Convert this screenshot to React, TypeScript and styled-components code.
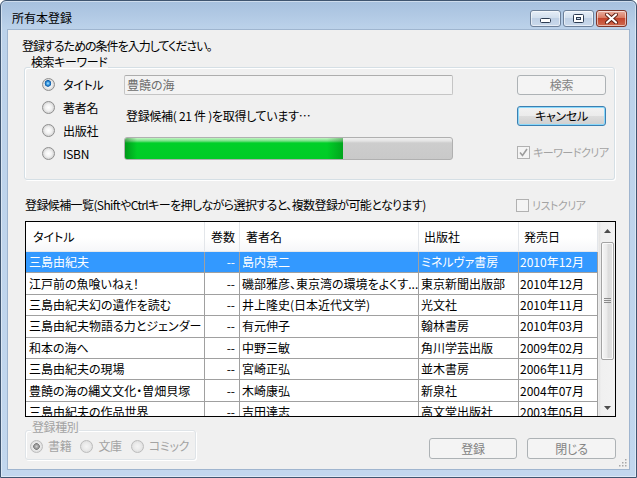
import styled, { createGlobalStyle } from 'styled-components';

const GlobalStyle = createGlobalStyle`
  html, body { margin: 0; padding: 0; }
  body {
    width: 637px;
    height: 478px;
    overflow: hidden;
    font-family: "Noto Sans CJK JP", "Noto Sans", sans-serif;
    font-size: 12px;
    font-feature-settings: "palt";
    color: #000;
  }
  * { box-sizing: border-box; }
`;

const Window = styled.div`
  width: 637px;
  height: 478px;
  border: 1px solid #3f5570;
  border-radius: 6px 6px 0 0;
  background: linear-gradient(#a6c0de 0px, #bcd2ea 28px, #c2d7ee 100%);
  box-shadow: inset 0 0 0 1px rgba(255, 255, 255, 0.45);
  padding: 0 7px 8px 7px;
  display: flex;
  flex-direction: column;
`;

const TitleBar = styled.div`
  height: 29px;
  display: flex;
  align-items: flex-start;
  padding-left: 4px;
`;

const TitleText = styled.div`
  margin-top: 10px;
  line-height: 14px;
`;

const CaptionButtons = styled.div`
  margin: 9px 2px 0 auto;
  display: flex;
  gap: 2px;
`;

const CaptionButton = styled.div<{ $close?: boolean }>`
  width: 31px;
  height: 17px;
  border-radius: 3px;
  border: 1px solid ${({ $close }) => ($close ? '#80362a' : '#6d8099')};
  background: ${({ $close }) =>
    $close
      ? 'linear-gradient(#eab0a2 0, #d97a62 45%, #c4452d 50%, #cf6a4f 100%)'
      : 'linear-gradient(#e6eef8 0, #d2dfee 45%, #bfd0e5 50%, #cad9eb 100%)'};
  box-shadow: inset 0 0 0 1px rgba(255, 255, 255, 0.55);
  display: flex;
  align-items: center;
  justify-content: center;
`;

const Client = styled.div`
  flex: 1;
  position: relative;
  background: #f0f0f0;
  box-shadow: 0 0 0 1px #9fb5cf;
  display: flex;
  flex-direction: column;
  padding: 0 13px 0 16px;
`;

const Intro = styled.div`
  margin: 9px 0 0 -2px;
  line-height: 14px;
  letter-spacing: -1px;
`;

const GroupBox = styled.div<{ $disabled?: boolean }>`
  border: 1px solid ${({ $disabled }) => ($disabled ? '#dfe4e8' : '#d5dfe5')};
  border-radius: 3px;
  box-shadow: inset 1px 1px 0 #fff, 1px 1px 0 #fff;
`;

const SearchGroup = styled(GroupBox)`
  margin-top: 14px;
  margin-right: 1px;
  height: 113px;
`;

const Legend = styled.div<{ $disabled?: boolean; $offset: number }>`
  width: fit-content;
  margin: ${({ $offset }) => `-${$offset}px 0 0 5px`};
  padding: 0 1px;
  line-height: 12px;
  letter-spacing: -0.4px;
  background: #f0f0f0;
  color: ${({ $disabled }) => ($disabled ? '#a3a3a3' : '#000')};
`;

const SearchBody = styled.div`
  display: grid;
  grid-template-columns: 99px 329px 64px 89px;
`;

const RadioColumn = styled.div`
  padding: 5px 0 0 17px;
  display: flex;
  flex-direction: column;
`;

const RadioRow = styled.div`
  height: 23px;
  display: flex;
  align-items: center;
  gap: 8px;
`;

const RadioMark = styled.span<{ $checked?: boolean; $disabled?: boolean }>`
  flex: none;
  width: 13px;
  height: 13px;
  border-radius: 50%;
  border: 1px solid ${({ $disabled }) => ($disabled ? '#bcbcbc' : '#8f8f8f')};
  background: ${({ $checked, $disabled }) => {
    const base = $disabled
      ? 'radial-gradient(circle, #f4f4f4 0, #ececec 3px, #dedede 6px)'
      : 'radial-gradient(circle, #ffffff 0, #f2f2f2 3px, #d2d2d2 6px)';
    if (!$checked) return base;
    const dot = $disabled
      ? 'radial-gradient(circle, #d0d0d0 0, #9a9a9a 2px, #7c7c7c 3px, transparent 3.6px)'
      : 'radial-gradient(circle at 45% 40%, #b6e6ff 0, #3a9be2 1.6px, #0e5aa6 3px, transparent 3.6px)';
    return `${dot}, ${base}`;
  }};
`;

const RadioLabel = styled.span<{ $disabled?: boolean }>`
  line-height: 14px;
  letter-spacing: -0.3px;
  color: ${({ $disabled }) => ($disabled ? '#a3a3a3' : '#000')};
`;

const MiddleColumn = styled.div`
  display: flex;
  flex-direction: column;
`;

const KeywordField = styled.div`
  margin-top: 7px;
  height: 20px;
  border: 1px solid #c5c5c5;
  border-top-color: #adadad;
  border-radius: 2px;
  background: #f3f3f3;
  color: #6d6d6d;
  padding-left: 2px;
  line-height: 18px;
`;

const StatusText = styled.div`
  margin-top: 14px;
  line-height: 14px;
  padding-left: 2px;
  letter-spacing: -0.3px;
`;

const ProgressTrack = styled.div`
  margin-top: 14px;
  height: 23px;
  border: 1px solid #b0b0b0;
  border-radius: 3px;
  overflow: hidden;
  background: linear-gradient(#f0f0f0 0, #e4e4e4 3px, #cdcdcd 5px, #c9c9c9 100%);
`;

const ProgressFill = styled.div`
  height: 100%;
  background:
    linear-gradient(90deg, rgba(0, 90, 10, 0.45) 0, rgba(0, 90, 10, 0) 12px, rgba(0, 90, 10, 0) calc(100% - 16px), rgba(0, 90, 10, 0.35) 100%),
    linear-gradient(#c4f6c4 0, #74e184 3px, #00cf28 5px, #00cc26 100%);
`;

const RightColumn = styled.div`
  grid-column: 4;
  display: flex;
  flex-direction: column;
  padding-top: 7px;
`;

const Button = styled.div<{ $disabled?: boolean; $focused?: boolean; $w?: number; $h?: number }>`
  width: ${({ $w }) => ($w ? `${$w}px` : 'auto')};
  height: ${({ $h }) => ($h ? `${$h}px` : '20px')};
  border-radius: 3px;
  display: flex;
  align-items: center;
  justify-content: center;
  line-height: 14px;
  letter-spacing: -0.3px;
  border: 1px solid ${({ $disabled, $focused }) => ($disabled ? '#adb2b5' : $focused ? '#3c7fb1' : '#707070')};
  background: ${({ $disabled }) =>
    $disabled ? '#f4f4f4' : 'linear-gradient(#f2f2f2 0, #ebebeb 50%, #dddddd 50%, #cfcfcf 100%)'};
  box-shadow: ${({ $disabled, $focused }) =>
    $disabled ? 'none' : $focused ? 'inset 0 0 0 1px #8ad9fb' : 'inset 0 0 0 1px #fcfcfc'};
  color: ${({ $disabled }) => ($disabled ? '#838383' : '#000')};
`;

const CancelButton = styled(Button)`
  margin-top: 11px;
`;

const CheckRow = styled.div<{ $top?: number }>`
  margin-top: ${({ $top }) => $top ?? 0}px;
  display: flex;
  align-items: center;
  gap: 3px;
  line-height: 14px;
  font-size: 11px;
  letter-spacing: -0.5px;
  white-space: nowrap;
  color: #a3a3a3;
`;

const CheckBox = styled.span`
  flex: none;
  width: 13px;
  height: 13px;
  border: 1px solid #b1b1b1;
  background: #f4f4f4;
  display: flex;
  align-items: center;
  justify-content: center;
`;

const ListLabelRow = styled.div`
  margin-top: 18px;
  display: grid;
  grid-template-columns: 1fr 100px;
  line-height: 14px;
  padding-left: 1px;
`;

const ListLabel = styled.span`
  letter-spacing: -0.6px;
  white-space: nowrap;
`;

const ListView = styled.div`
  margin: 9px 0 0 1px;
  height: 196px;
  border: 1px solid #000;
  background: #fff;
  display: grid;
  grid-template-columns: 1fr 17px;
  overflow: hidden;
`;

const Table = styled.div`
  overflow: hidden;
`;

const columns = '179px 35px 179px 100px 79px';

const HeaderRow = styled.div`
  display: grid;
  grid-template-columns: ${columns};
  height: 30px;
  border-bottom: 1px solid #e6e8eb;
  background: linear-gradient(#ffffff 0, #ffffff 55%, #f6f7f9 100%);
`;

const HeaderCell = styled.div<{ $pad: number }>`
  display: flex;
  align-items: center;
  padding-left: ${({ $pad }) => $pad}px;
  border-right: 1px solid #e3e6ea;
  line-height: 14px;
`;

const Row = styled.div<{ $selected?: boolean }>`
  display: grid;
  grid-template-columns: ${columns};
  height: 21.4px;
  border-bottom: 1px solid #a0a0a0;
  background: ${({ $selected }) => ($selected ? '#3399ff' : '#fff')};
  color: ${({ $selected }) => ($selected ? '#fff' : '#000')};
`;

const Cell = styled.div<{ $pad?: number; $right?: boolean }>`
  display: flex;
  align-items: center;
  justify-content: ${({ $right }) => ($right ? 'flex-end' : 'flex-start')};
  padding: ${({ $pad, $right }) => ($right ? `0 4px 0 0` : `0 0 0 ${$pad ?? 1}px`)};
  border-right: 1px solid #a0a0a0;
  white-space: nowrap;
  overflow: hidden;
  line-height: 14px;
`;

const ScrollBar = styled.div`
  display: flex;
  flex-direction: column;
  background: linear-gradient(90deg, #e2e2e2 0, #f0f0f0 2px, #f2f2f2 100%);
  border-left: 1px solid #ececec;
`;

const ArrowBox = styled.div`
  height: 17px;
  flex: none;
  display: flex;
  align-items: center;
  justify-content: center;
`;

const Track = styled.div`
  flex: 1;
  padding: 3px 1px 0 2px;
`;

const Thumb = styled.div`
  height: 118px;
  border: 1px solid #a3a3a3;
  border-radius: 2px;
  background: linear-gradient(90deg, #f6f6f6 0, #eaeaea 45%, #dcdcdc 55%, #e3e3e3 100%);
  box-shadow: inset 0 0 0 1px #fafafa;
  display: flex;
  align-items: center;
  justify-content: center;
`;

const BottomRow = styled.div`
  margin-top: 13px;
  display: flex;
  align-items: flex-start;
`;

const KindGroup = styled(GroupBox)`
  margin-left: 1px;
  width: 171px;
  height: 30px;
`;

const KindOptions = styled.div`
  margin-top: 6px;
  padding-left: 4px;
  display: flex;
  gap: 9px;
`;

const KindOption = styled.div`
  display: flex;
  align-items: center;
  gap: 5px;
`;

const ActionButtons = styled.div`
  margin: 8px 0 0 auto;
  display: flex;
  gap: 10px;
`;

const Grip = styled.svg`
  position: absolute;
  right: 2px;
  bottom: 2px;
`;

type Book = { title: string; author: string; publisher: string; date: string };

const books: Book[] = [
  { title: '三島由紀夫', author: '島内景二', publisher: 'ミネルヴァ書房', date: '2010年12月' },
  { title: '江戸前の魚喰いねぇ！', author: '磯部雅彦、東京湾の環境をよくす...', publisher: '東京新聞出版部', date: '2010年12月' },
  { title: '三島由紀夫幻の遺作を読む', author: '井上隆史(日本近代文学)', publisher: '光文社', date: '2010年11月' },
  { title: '三島由紀夫物語る力とジェンダー', author: '有元伸子', publisher: '翰林書房', date: '2010年03月' },
  { title: '和本の海へ', author: '中野三敏', publisher: '角川学芸出版', date: '2009年02月' },
  { title: '三島由紀夫の現場', author: '宮崎正弘', publisher: '並木書房', date: '2006年11月' },
  { title: '豊饒の海の縄文文化・曽畑貝塚', author: '木崎康弘', publisher: '新泉社', date: '2004年07月' },
  { title: '三島由紀夫の作品世界', author: '吉田達志', publisher: '高文堂出版社', date: '2003年05月' },
];

const CheckMark = () => (
  <svg width="9" height="9" viewBox="0 0 9 9">
    <path d="M1 4.5 L3.5 7.5 L8 1" fill="none" stroke="#9c9c9c" strokeWidth="1.6" />
  </svg>
);

const fetched = 14;
const total = 21;

export default function App() {
  return (
    <>
      <GlobalStyle />
      <Window>
        <TitleBar>
          <TitleText>所有本登録</TitleText>
          <CaptionButtons>
            <CaptionButton>
              <svg width="11" height="6" viewBox="0 0 11 6" style={{ marginTop: 5 }}>
                <rect x="0.5" y="0.5" width="10" height="4" rx="1" fill="#fff" stroke="#2c3b52" />
              </svg>
            </CaptionButton>
            <CaptionButton>
              <svg width="11" height="9" viewBox="0 0 11 9">
                <rect x="0.5" y="0.5" width="10" height="8" rx="1" fill="#fff" stroke="#2c3b52" />
                <rect x="3.5" y="3.5" width="4" height="2" fill="#c9d8ea" stroke="#2c3b52" />
              </svg>
            </CaptionButton>
            <CaptionButton $close>
              <svg width="13" height="11" viewBox="0 0 13 11">
                <path d="M2 1.5 L11 9.5 M11 1.5 L2 9.5" stroke="#5b1d12" strokeWidth="4" strokeLinecap="round" />
                <path d="M2 1.5 L11 9.5 M11 1.5 L2 9.5" stroke="#fff" strokeWidth="2.2" strokeLinecap="round" />
              </svg>
            </CaptionButton>
          </CaptionButtons>
        </TitleBar>

        <Client>
          <Intro>登録するための条件を入力してください。</Intro>

          <SearchGroup>
            <Legend $offset={12}>検索キーワード</Legend>
            <SearchBody>
              <RadioColumn>
                {['タイトル', '著者名', '出版社', 'ISBN'].map((label, i) => (
                  <RadioRow key={label}>
                    <RadioMark $checked={i === 0} />
                    <RadioLabel>{label}</RadioLabel>
                  </RadioRow>
                ))}
              </RadioColumn>
              <MiddleColumn>
                <KeywordField>豊饒の海</KeywordField>
                <StatusText>登録候補( {total} 件 )を取得しています…</StatusText>
                <ProgressTrack>
                  <ProgressFill style={{ width: `${(fetched / total) * 100}%` }} />
                </ProgressTrack>
              </MiddleColumn>
              <RightColumn>
                <Button $disabled>検索</Button>
                <CancelButton $focused>キャンセル</CancelButton>
                <CheckRow $top={19}>
                  <CheckBox>
                    <CheckMark />
                  </CheckBox>
                  キーワードクリア
                </CheckRow>
              </RightColumn>
            </SearchBody>
          </SearchGroup>

          <ListLabelRow>
            <ListLabel>登録候補一覧(ShiftやCtrlキーを押しながら選択すると、複数登録が可能となります)</ListLabel>
            <CheckRow>
              <CheckBox />
              リストクリア
            </CheckRow>
          </ListLabelRow>

          <ListView>
            <Table>
              <HeaderRow>
                <HeaderCell $pad={7}>タイトル</HeaderCell>
                <HeaderCell $pad={6}>巻数</HeaderCell>
                <HeaderCell $pad={6}>著者名</HeaderCell>
                <HeaderCell $pad={5}>出版社</HeaderCell>
                <HeaderCell $pad={5}>発売日</HeaderCell>
              </HeaderRow>
              {books.map((b, i) => (
                <Row key={b.title} $selected={i === 0}>
                  <Cell $pad={3}>{b.title}</Cell>
                  <Cell $right>--</Cell>
                  <Cell $pad={2}>{b.author}</Cell>
                  <Cell $pad={2}>{b.publisher}</Cell>
                  <Cell $pad={1}>{b.date}</Cell>
                </Row>
              ))}
            </Table>
            <ScrollBar>
              <ArrowBox>
                <svg width="7" height="4" viewBox="0 0 7 4">
                  <path d="M0 4 L3.5 0 L7 4 Z" fill="#4d4d4d" />
                </svg>
              </ArrowBox>
              <Track>
                <Thumb>
                  <svg width="7" height="6" viewBox="0 0 7 6">
                    <path d="M0 0.5 H7 M0 2.5 H7 M0 4.5 H7" stroke="#8a8a8a" strokeWidth="1" />
                  </svg>
                </Thumb>
              </Track>
              <ArrowBox>
                <svg width="7" height="4" viewBox="0 0 7 4">
                  <path d="M0 0 L3.5 4 L7 0 Z" fill="#4d4d4d" />
                </svg>
              </ArrowBox>
            </ScrollBar>
          </ListView>

          <BottomRow>
            <KindGroup $disabled>
              <Legend $disabled $offset={10}>登録種別</Legend>
              <KindOptions>
                {['書籍', '文庫', 'コミック'].map((label, i) => (
                  <KindOption key={label}>
                    <RadioMark $disabled $checked={i === 0} />
                    <RadioLabel $disabled>{label}</RadioLabel>
                  </KindOption>
                ))}
              </KindOptions>
            </KindGroup>
            <ActionButtons>
              <Button $disabled $w={88} $h={21}>登録</Button>
              <Button $disabled $w={89} $h={21}>閉じる</Button>
            </ActionButtons>
          </BottomRow>

          <Grip width="10" height="10" viewBox="0 0 10 10">
            {[
              [8, 2],
              [8, 5],
              [5, 5],
              [8, 8],
              [5, 8],
              [2, 8],
            ].map(([x, y]) => (
              <rect key={`${x}-${y}`} x={x} y={y} width="1.5" height="1.5" fill="#a8a8a8" />
            ))}
          </Grip>
        </Client>
      </Window>
    </>
  );
}
